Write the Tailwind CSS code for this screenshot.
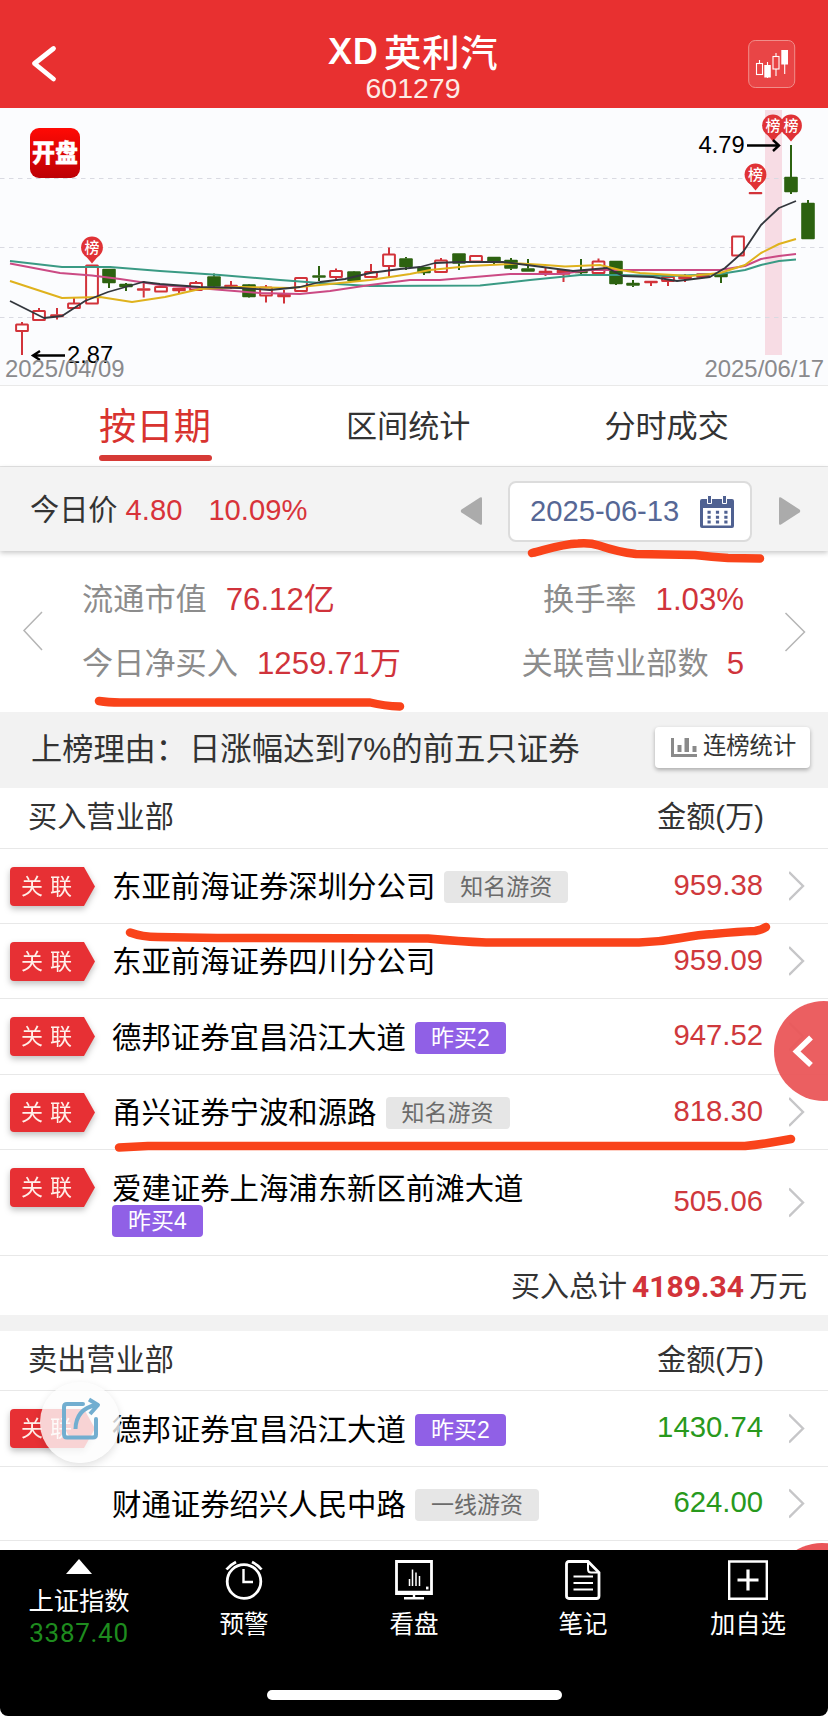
<!DOCTYPE html>
<html lang="zh-CN">
<head>
<meta charset="utf-8">
<title>XD英利汽 601279</title>
<script src="https://cdn.jsdelivr.net/npm/@tailwindcss/browser@4"></script>
</head>
<body class="bg-white">
<div class="relative w-[828px] h-[1716px] overflow-hidden bg-white flex flex-col font-['Liberation_Sans','Noto_Sans_CJK_SC',sans-serif] leading-none text-[#333] whitespace-nowrap">

  <!-- Title bar -->
  <header class="h-[108px] shrink-0 bg-[#e83030] text-white flex items-start justify-between">
    <svg class="w-[120px] h-[108px]" viewBox="0 0 120 108" fill="none" stroke="#fff" stroke-width="4.8" stroke-linecap="round" stroke-linejoin="round"><path d="M53.500 48.500L34.500 63.500 53.500 79"/></svg>
    <div class="flex flex-col items-center pt-[33px] pr-[2px]">
      <div class="flex items-center text-[37.300px] font-medium font-['Noto_Sans_CJK_SC',sans-serif]"><span class="font-['Inter'] font-semibold text-[35px] mr-1.5">XD</span><span class="tracking-[0.8px]">英利汽</span></div>
      <div class="text-[28.500px] font-['Liberation_Sans'] text-[#fdebe6] mt-[4px]">601279</div>
    </div>
    <svg class="w-[120px] h-[108px]" viewBox="708 0 120 108" fill="none" stroke="#fff">
      <rect x="748.700" y="40.500" width="46" height="47" rx="6.500" fill="#e94546" stroke="#f08e8a"/>
      <g stroke-width="1.100"><rect x="756.500" y="63.500" width="6" height="11"/><path d="M759.500 60v3.500M767.500 62v16M776 53v3.500M776 69v7M784.700 62v12"/><rect x="773" y="56.500" width="6" height="12.500"/></g>
      <g fill="#fff" stroke="none"><rect x="764.300" y="65" width="6.500" height="12.500"/><rect x="781.300" y="50" width="6.700" height="14.500"/></g>
    </svg>
  </header>

  <!-- Candlestick chart -->
  <svg id="chart" class="w-[828px] h-[278px] shrink-0 block bg-[#fbfcfe]" viewBox="0 108 828 278" font-family="Liberation Sans, sans-serif">
    <defs><linearGradient id="ic" x1="0" y1="0" x2="0" y2="1"><stop offset="0" stop-color="#ff0a05"/><stop offset="1" stop-color="#bd0005"/></linearGradient></defs>
    <rect x="765" y="110" width="17" height="245" fill="#f7dce4"/>
    <path d="M0 178.500H828M0 247.500H828M0 317.500H828" stroke="#d9dae2" stroke-dasharray="4.500 4.500"/>
    <g id="candles"></g>
    <g fill="none" stroke-width="2" stroke-linejoin="round">
      <path stroke="#3a9a84" d="M10 261L62 267 110 267 160 271 220 275 280 280 320 283 370 286 480 285.500 530 280 580 275 620 275 670 276 720 274 745 270 761 265 779 261 796 259.500"/>
      <path stroke="#cb4a84" d="M10 263.500L60 273 92 275.500 120 279 160 285 210 289 260 293 300 294 330 291 370 285 410 280 440 280 510 274 560 274 590 270 720 270 745 266 761 259 779 256 796 254"/>
      <path stroke="#dfb21d" d="M10 281L62 298 100 297 132 302 165 297 200 289 240 287 290 288 330 284 370 280 410 274 430 270 470 266 520 263.500 545 265 565 266.500 600 265 620 270 640 273 690 276 720 273 745 265 761 253 779 244 796 239"/>
      <path stroke="#33373d" stroke-width="1.800" d="M10 301L44 318 62 316 85 301 108 292 143 282 160 284 200 287 240 288 270 290 300 287 320 282 345 279 370 273 400 269 420 267 435 263 460 262 503 262 527 265 573 271 607 268 623 276 653 277 677 281 710 277 725 268 743 252 761 225 779 208 796 201"/>
    </g>
    <g id="pins"></g>
    <g fill="none" stroke="#000" stroke-width="2.400"><path d="M65 355.500H34M40 351L33 355.500 40 360M747 145.500H778M773 140L779 145.500 773 151"/></g>
    <text x="698.500" y="153" font-size="23.700">4.79</text>
    <text x="67" y="362.500" font-size="23.700">2.87</text>
    <text x="5" y="377" font-size="23.900" fill="#8a8a8d">2025/04/09</text>
    <text x="704.500" y="377" font-size="23.900" fill="#8a8a8d">2025/06/17</text>
    <rect x="30" y="128" width="50" height="50" rx="9" fill="url(#ic)"/>
    <text x="55" y="162" text-anchor="middle" font-size="23" font-weight="900" fill="#fff" stroke="#fff" stroke-width=".3" font-family="Noto Sans CJK SC, sans-serif" transform="translate(0 -17.500) scale(1 1.110)">开盘</text>
    <path d="M0 385.500H828" stroke="#e9e9e9"/>
  </svg>

  <!-- Tabs -->
  <nav class="h-[81px] shrink-0 flex items-start border-b border-[#e4e4e4]">
    <div class="ml-[99px] w-[113px] flex flex-col items-center text-[#d8332f] text-[37.300px]">
      <span class="mt-[23px] -ml-[1px]">按日期</span><i class="w-full h-[6px] rounded-full bg-[#d63a36] mt-[9px]"></i>
    </div>
    <span class="ml-[134px] mt-[25px] text-[31.100px]">区间统计</span>
    <span class="ml-[134px] mt-[25px] text-[31.100px]">分时成交</span>
  </nav>

  <!-- Price and date picker -->
  <section class="h-[84px] shrink-0 bg-[#f3f3f3] flex items-center pt-[4px] shadow-[0_2px_5px_rgba(0,0,0,0.22)] relative">
    <div class="flex items-center text-[29.200px] text-[#d8333a] w-[430px] pl-[30px]"><span class="text-[#333]">今日价</span><span class="ml-[8px]">4.80</span><span class="ml-[26px]">10.09%</span></div>
    <svg class="ml-[30px] w-[23px] h-[30px]" viewBox="0 0 23 30" fill="#ababab"><path d="M22 2.500V27.500Q22 29.500 20 28.500L1.500 16.500Q0 15 1.500 13.500L20 1.500Q22 .5 22 2.500Z"/></svg>
    <div class="ml-[25px] w-[244px] h-[61px] rounded-lg border-2 border-[#dcdcdc] bg-white flex items-center justify-between pl-[20px] pr-[16px] text-[29.200px] text-[#566795]">
      <span class="pt-[1px]">2025-06-13</span>
      <svg class="w-[34px] h-[33px]" viewBox="0 0 34 33"><path fill="#4f6191" fill-rule="evenodd" d="M2 4H32Q34 4 34 6V31Q34 33 32 33H2Q0 33 0 31V6Q0 4 2 4ZM3 13V30.500H31V13Z"/><path fill="#4f6191" stroke="#fff" d="M7.500 .5h4v8h-4zM22.500 .5h4v8h-4z"/><path stroke="#4f6191" stroke-width="3" stroke-dasharray="3.200 5.200" d="M7.500 17.300H28M7.500 22.300H28M7.500 27H28"/></svg>
    </div>
    <svg class="ml-[26px] w-[23px] h-[30px] rotate-180" viewBox="0 0 23 30" fill="#ababab"><path d="M22 2.500V27.500Q22 29.500 20 28.500L1.500 16.500Q0 15 1.500 13.500L20 1.500Q22 .5 22 2.500Z"/></svg>
  </section>

  <!-- Key figures -->
  <section class="h-[161px] shrink-0 flex items-start text-[31.200px] text-[#8c8c8c]">
    <svg class="w-[82px] h-[161px]" viewBox="0 551 82 161" fill="none" stroke="#b5b5b5" stroke-width="1.500"><path d="M42 612L24 630.500 42 650"/></svg>
    <div class="flex-1 flex flex-col gap-[33px] pt-[33px] pr-[1px]">
      <div class="flex justify-between"><div class="flex gap-[19px]"><span>流通市值</span><span class="text-[#d0333b]">76.12亿</span></div><div class="flex gap-[19px]"><span>换手率</span><span class="text-[#d0333b]">1.03%</span></div></div>
      <div class="flex justify-between"><div class="flex gap-[19px]"><span>今日净买入</span><span class="text-[#d0333b]">1259.71万</span></div><div class="flex gap-[18px]"><span>关联营业部数</span><span class="text-[#d0333b]">5</span></div></div>
    </div>
    <svg class="w-[83px] h-[161px]" viewBox="745 551 83 161" fill="none" stroke="#b5b5b5" stroke-width="1.500"><path d="M785.500 613L804.500 632 785.500 651"/></svg>
  </section>

  <!-- Listing reason -->
  <section class="h-[76px] shrink-0 bg-[#f2f2f2] flex items-center justify-between pl-[31px] pr-[18px]">
    <span class="text-[31.200px]">上榜理由：<span class="ml-[2px] text-[31.400px]">日涨幅达到7%的前五只证券</span></span>
    <div class="w-[155px] h-[41px] -mt-[5px] rounded-sm bg-white shadow-[0_2px_4px_rgba(0,0,0,0.3)] flex items-center pl-[16px] gap-[6px] text-[23.300px]">
      <svg class="w-[26px] h-[19px]" viewBox="0 0 26 19" fill="#8a8a8a"><path d="M0 0h3v16h23v3H0zM6.500 7h4v7h-4zM13.500 0h4.500v14h-4.500zM21.500 8h4v6h-4z"/></svg><span class="-mt-[1px]">连榜统计</span>
    </div>
  </section>

  <!-- Buyers -->
  <section class="h-[60px] shrink-0 flex items-center justify-between pl-[28px] pr-[64px] pb-[1px] text-[29.200px]"><span>买入营业部</span><span>金额(万)</span></section>
  <div id="buy" class="flex flex-col shrink-0"></div>
  <section class="h-[60px] shrink-0 flex items-center justify-end pr-[21px] pt-[3px] border-t border-[#e8e8e8] text-[29px]"><span>买入总计</span><b class="font-['Roboto'] text-[30px] text-[#d2333a] mx-[5px]">4189.34</b><span>万元</span></section>
  <div class="h-[16px] shrink-0 bg-[#f2f2f2]"></div>

  <!-- Sellers -->
  <section class="h-[59px] shrink-0 flex items-center justify-between pl-[28px] pr-[64px] text-[29.200px]"><span>卖出营业部</span><span>金额(万)</span></section>
  <div id="sell" class="flex flex-col shrink-0"></div>
  <div class="h-[10px] shrink-0 border-t border-[#e8e8e8]"></div>

  <!-- Bottom navigation -->
  <footer class="relative z-20 h-[166px] shrink-0 bg-white">
    <div class="h-full bg-black rounded-b-lg text-white flex flex-col items-center">
      <div class="w-full h-[140px] flex items-start text-[24.500px]">
        <div class="w-[158px] flex flex-col items-center pt-[9px] text-[25.300px]">
          <svg class="w-[26px] h-[15px]" viewBox="0 0 26 15" fill="#fff"><path d="M13 0L26 15H0z"/></svg>
          <span class="mt-[15px]">上证指数</span><span class="mt-[6px] font-['Roboto'] text-[26px] text-[#1e8c1e] tracking-[0.7px]">3387.40</span>
        </div>
        <div class="w-[172px] flex flex-col items-center pt-[10px]">
          <svg class="w-[38px] h-[40px]" viewBox="0 0 38 40" fill="none" stroke="#fff" stroke-width="2.800"><circle cx="19" cy="21.500" r="16.800"/><path d="M18.500 9V22H28" stroke-width="2.400"/><path d="M1.500 9.500Q5 5 11 2M36.500 9.500Q33 5 27 2"/></svg>
          <span class="mt-[13px]">预警</span>
        </div>
        <div class="w-[168px] flex flex-col items-center pt-[10px]">
          <svg class="w-[38px] h-[40px]" viewBox="0 0 38 40" fill="none" stroke="#fff" stroke-width="2.800"><path d="M1.500 1.500h35v32h-35z"/><path d="M2 32.500H36" stroke-width="3.400"/><path d="M19 34V38M9 38.200H29" stroke-width="2.400"/><path d="M14.500 26v-7M17.500 26V9.500M21 26V12.500M24.500 26V16" stroke-width="1.500"/><path d="M31 28h2.500"/></svg>
          <span class="mt-[13px]">看盘</span>
        </div>
        <div class="w-[170px] flex flex-col items-center pt-[10px]">
          <svg class="w-[36px] h-[40px]" viewBox="0 0 36 40" fill="none" stroke="#fff" stroke-width="2.800"><path d="M4 1.500H23L34 12.500V36Q34 38.500 31.500 38.500H4Q1.500 38.500 1.500 36V4Q1.500 1.500 4 1.500Z"/><path d="M23 2V9Q23 12.500 26 12.500H34" stroke-width="2"/><path d="M8.500 16.500H28M8.500 23H28M8.500 29.500H28" stroke-width="2"/></svg>
          <span class="mt-[13px]">笔记</span>
        </div>
        <div class="w-[160px] flex flex-col items-center pt-[10px] text-[25.300px]">
          <svg class="w-[40px] h-[40px]" viewBox="0 0 40 40" fill="none" stroke="#fff" stroke-width="2.400"><path d="M1.200 1.500h37.600v37.300h-37.600z"/><path d="M20 9.500V30.500M9.500 20H30.500" stroke-width="3.200"/></svg>
          <span class="mt-[12px]">加自选</span>
        </div>
      </div>
      <div class="w-[295px] h-[10px] rounded-full bg-white"></div>
    </div>
  </footer>

  <!-- Floating buttons -->
  <div class="absolute z-10 left-[774px] top-[1001px] w-[100px] h-[100px] rounded-full bg-[#ea5659]/95"></div>
  <svg class="absolute z-10 left-[790px] top-[1034px] w-[26px] h-[36px]" viewBox="790 1034 26 36" fill="none" stroke="#fff" stroke-width="5.500"><path d="M811 1037.500L796.500 1051.500 811 1065"/></svg>
  <div class="absolute z-10 left-[772px] top-[1543px] w-[100px] h-[100px] rounded-full bg-[#ea5659]"></div>
  <div class="absolute z-10 left-[40px] top-[1382px] w-[80px] h-[81px] rounded-full bg-[#fdfdfd]/80 shadow-[0_3px_8px_rgba(0,0,0,0.12)]"></div>
  <svg class="absolute z-10 left-[59px] top-[1395px] w-[44px] h-[48px]" viewBox="60 1396 44 48" fill="none" stroke="#72aed0" stroke-width="4"><path d="M84 1405H68Q65 1405 65 1408V1435Q65 1438.500 68 1438.500H94Q97 1438.500 97 1435.500V1420" stroke-linecap="round"/><path d="M76.500 1430Q77 1410 97 1406M90 1400.500L99 1406 91 1415" stroke-linejoin="round"/></svg>

  <!-- Marker strokes -->
  <svg class="absolute z-10 left-0 top-0 w-[828px] h-[1716px] pointer-events-none" viewBox="0 0 828 1716" fill="none" stroke="#f9431a" stroke-width="8.500" stroke-linecap="round" stroke-linejoin="round">
    <path d="M532 553C548 549 562 544 578 543.500Q590 542.500 599 545.500Q618 552 636 554L695 555Q712 557 728 558L760 558.500"/>
    <path d="M99 701Q108 702.500 120 702.500H370Q384 706 400 706.500"/>
    <path d="M130 932.500Q142 937 158 937L217 938 428 938.500Q460 941.500 486 942.500H639Q660 942 681 938Q700 934.500 713 934Q740 931.500 755 931Q762 930 766 927"/>
    <path d="M119 1147.500L148 1146H745Q758 1144.500 768 1143Q780 1141 791 1139"/>
  </svg>
</div>

<script>
const R = '#d2333a', G = '#2c6210';
// [center x, body top, body bottom, wick top, wick bottom, kind]; r hollow red, f filled red, g green
const data = [
 [22,324.5,331,322,355,'r'],[39,311,320,308,320,'r'],[57,314.5,317,308,319.5,'f'],[74,303.5,308,298,308,'r'],[92,265.5,303.5,265.5,303.5,'r'],
 [109,269,283,269,288,'g'],[126,284,287,283,291,'g'],[143.7,288.5,290.5,281,297.5,'f'],[161,287,291.5,287,292,'r'],[179,288,291,288,293,'f'],
 [196,283,290,281,290,'r'],[214,276.5,286.5,273.5,287,'g'],[231,285,287,281,289,'f'],[249,284.5,297,284,297.5,'g'],[266,287.5,295.5,285,302.5,'r'],
 [284,294,297,290,303.5,'f'],[301,278,291,278,291,'r'],[319,275.5,277.5,266,281,'g'],[336,271,277,268.5,280,'r'],[354,271.5,281,271,282,'g'],
 [371,272,277,264,277,'r'],[389,254.5,266,247.5,277,'r'],[406,258.5,267,257,270,'g'],[424,267,273,267,275,'g'],[441,260.5,272,258,272,'r'],
 [459,253.5,263.5,253.5,270,'g'],[476,256,261.5,256,263,'r'],[494,257,262.5,257,265,'g'],[511,260,268.5,258,270,'g'],[528,268.5,271.5,259,271.5,'g'],
 [545.5,271,274.5,268,276,'f'],[563.5,270,274.5,270,282,'f'],[581,271,273,259,274,'g'],[598.5,261.5,273,258.5,273,'r'],[616,261,284,261,285,'g'],
 [633,283,285.5,280,287,'g'],[651,281,283,281,286,'f'],[668,277,281,276,286,'r'],[685,276,279,274,282,'f'],[703,273.5,277.5,273.5,277.5,'f'],
 [721,273,277,272,283,'g'],[738,236.5,255.5,236.5,255.5,'r'],[755.5,192.2,194,192.2,194,'f'],[791,177,192,145,194,'g'],[808,203,239,200,239,'g']];
document.getElementById('candles').innerHTML = data.map(([x,t,b,wt,wb,k]) => {
  const c = k === 'g' ? G : R;
  const hollow = k === 'r';
  return `<path d="M${x} ${wt}V${t}M${x} ${b}V${wb}" stroke="${c}" stroke-width="2"/>` +
    (hollow ? `<rect x="${x-5.9}" y="${t}" width="11.8" height="${b-t}" fill="#fff" stroke="${c}" stroke-width="2" rx=".5"/>`
            : `<rect x="${x-6.8}" y="${t-.3}" width="13.6" height="${b-t+.6}" rx="1" fill="${c}"/>`);
}).join('');
document.getElementById('pins').innerHTML = [[92,247.5],[755.5,174.5],[773,125.5],[791,125.5]].map(([x,y]) =>
  `<path d="M${x-8} ${y+6.5}L${x} ${y+16} ${x+8} ${y+6.5}z" fill="#e03236"/><circle cx="${x}" cy="${y}" r="10.9" fill="#e03236"/><text x="${x}" y="${y+5.5}" text-anchor="middle" font-size="15" font-weight="500" fill="#fff" font-family="Noto Sans CJK SC, sans-serif">榜</text>`).join('');

const TAG = {
  g: 'inline-flex items-center justify-center h-[32px] w-[124px] rounded-sm bg-[#e6e6e6] text-[#6b6b6b] text-[23px] pt-[1px]',
  p: 'inline-flex items-center justify-center h-[32px] w-[91px] rounded bg-[#9060e6] text-white text-[23px] pt-[1px]'
};
const row = ([rel, name, kind, tag, amt, color, tall, h]) => `
  <div class="flex items-start border-t border-[#e8e8e8]" style="height:${h}px">
    <div class="w-[102px] pl-[10px] pt-[18px] shrink-0">${rel ? `<div class="drop-shadow-[0_3px_3px_rgba(0,0,0,0.25)] w-[86px]"><div class="h-[39px] rounded-l bg-[#e73034] text-[#fff0ea] text-[22px] flex items-center gap-[7px] pl-[11px] [clip-path:polygon(0_0,74px_0,85px_50%,74px_100%,0_100%)]"><span>关</span><span>联</span></div></div>` : ''}</div>
    <div class="flex-1 pl-[10px] text-[29.400px] text-black ${tall ? 'pt-[24px] flex flex-col items-start gap-[2px]' : 'h-full flex items-center gap-[9px] pt-[2px]'}"><span>${name}</span>${tag ? `<span class="${TAG[kind]}">${tag}</span>` : ''}</div>
    <div class="h-full flex items-center pb-[3px] text-[29.300px] ${color}">${amt}</div>
    <svg class="w-[16px] h-full ml-[26px] mr-[23px]" viewBox="0 0 16 30" fill="none" stroke="#c6c6c8" stroke-width="2.400"><path d="M0 1L14 15 0 29"/></svg>
  </div>`;
const RED = 'text-[#cf383c]', GRN = 'text-[#28991c]';
document.getElementById('buy').innerHTML = [
 [1,'东亚前海证券深圳分公司','g','知名游资','959.38',RED,0,75],
 [1,'东亚前海证券四川分公司','','','959.09',RED,0,75],
 [1,'德邦证券宜昌沿江大道','p','昨买2','947.52',RED,0,76],
 [1,'甬兴证券宁波和源路','g','知名游资','818.30',RED,0,75],
 [1,'爱建证券上海浦东新区前滩大道','p','昨买4','505.06',RED,1,106]].map(row).join('');
document.getElementById('sell').innerHTML = [
 [1,'德邦证券宜昌沿江大道','p','昨买2','1430.74',GRN,0,76],
 [0,'财通证券绍兴人民中路','g','一线游资','624.00',GRN,0,74]].map(row).join('');
</script>
</body>
</html>
